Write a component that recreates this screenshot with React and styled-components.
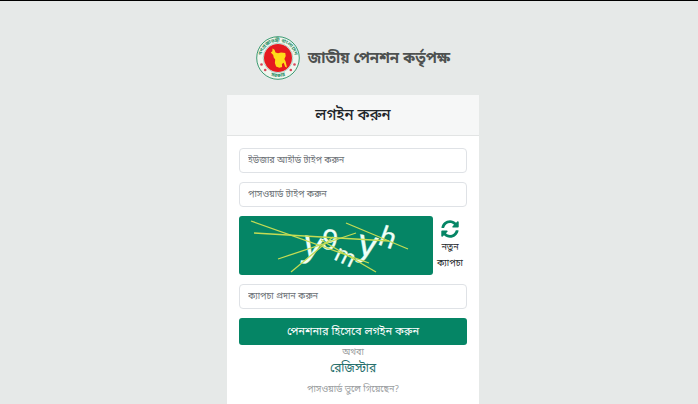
import React from "react";
import styled, { createGlobalStyle } from "styled-components";

const GlobalStyle = createGlobalStyle`
  *, *::before, *::after { box-sizing: border-box; }
  body {
    margin: 0;
    background: #e6e9e8;
    color: #212529;
    font-family: "Noto Sans Bengali", "Noto Sans", sans-serif;
    overflow: hidden;
  }
  button, input { font-family: inherit; }
`;

const Page = styled.div`
  display: flex;
  flex-direction: column;
  align-items: center;
  min-height: 100vh;
  padding: 34px 8px 0 16px;
  border-top: 1px solid #000;
`;

const Brand = styled.header`
  display: flex;
  align-items: center;
  gap: 8px;
  height: 46px;
`;

const Emblem = styled.svg`
  width: 44px;
  height: 44px;
  flex: none;
`;

const BrandName = styled.h1`
  margin: 0;
  padding-top: 2px;
  font-size: 15px;
  line-height: 24px;
  font-weight: 700;
  color: #4e5150;
  white-space: nowrap;
`;

const Card = styled.main`
  width: 100%;
  max-width: 252px;
  margin-top: 14px;
  background: #fff;
`;

const CardHeader = styled.div`
  display: flex;
  align-items: center;
  justify-content: center;
  height: 41px;
  background: #f6f7f7;
  border-bottom: 1px solid #e2e4e4;
`;

const CardTitle = styled.h2`
  margin: 0;
  padding-top: 2px;
  font-size: 15px;
  line-height: 24px;
  font-weight: 500;
`;

const LoginForm = styled.form`
  display: flex;
  flex-direction: column;
  gap: 9px;
  padding: 12px 12px 0;
`;

const TextField = styled.input`
  width: 100%;
  height: 25px;
  padding: 0 8px;
  border: 1px solid #dfe2e6;
  border-radius: 4px;
  background: #fff;
  color: #212529;
  font-size: 9px;
  outline: none;
  &::placeholder { color: #6b7075; opacity: 1; }
`;

const CaptchaRow = styled.div`
  display: flex;
  height: 59px;
`;

const CaptchaImage = styled.svg`
  flex: 1;
  min-width: 0;
  height: 59px;
  border-radius: 3px;
  background: #058565;
`;

const RefreshButton = styled.button`
  display: flex;
  flex-direction: column;
  align-items: center;
  flex: none;
  width: 34px;
  padding: 4px 0 0;
  border: 0;
  background: none;
  color: #212529;
  font-size: 9px;
  line-height: 16px;
  white-space: nowrap;
  svg { width: 18px; height: 18px; flex: none; margin-bottom: 2px; color: #058565; }
`;

const SubmitButton = styled.button`
  height: 27px;
  padding: 0;
  border: 0;
  border-radius: 3px;
  background: #058565;
  color: #fff;
  font-size: 11px;
  line-height: 24px;
`;

const Links = styled.div`
  display: flex;
  flex-direction: column;
  align-items: center;
  padding: 1px 0 12px;
`;

const Separator = styled.span`
  color: #999c9e;
  font-size: 9px;
  line-height: 15px;
`;

const RegisterLink = styled.a`
  color: #28706d;
  font-size: 12px;
  line-height: 16px;
  text-decoration: none;
`;

const ForgotLink = styled.a`
  margin-top: 5px;
  color: #999c9e;
  font-size: 9px;
  line-height: 16px;
  text-decoration: none;
`;

function GovernmentEmblem() {
  return (
    <Emblem viewBox="0 0 44 44" aria-hidden="true">
      <defs>
        <path id="ringTop" d="M5.5 25 A16.7 16.7 0 1 1 38.5 25" />
        <path id="ringBottom" d="M10 36.8 A19 19 0 0 0 34 36.8" />
      </defs>
      <circle cx="22" cy="22" r="21.3" fill="#f1f5ee" stroke="#3b9b72" strokeWidth="1" />
      <circle cx="22" cy="22" r="14.8" fill="#fff" stroke="#79b497" strokeWidth="0.6" />
      <circle cx="22" cy="22" r="14" fill="#e51b20" />
      <g fill="#2d9169" fontSize="5" fontWeight="700" textAnchor="middle">
        <text><textPath href="#ringTop" startOffset="50%">গণপ্রজাতন্ত্রী বাংলাদেশ</textPath></text>
        <text><textPath href="#ringBottom" startOffset="50%">সরকার</textPath></text>
      </g>
      <g fill="#d9485b">
        <circle cx="5.5" cy="28.5" r="1.3" />
        <circle cx="9.2" cy="34" r="1.3" />
        <circle cx="38.5" cy="28.5" r="1.3" />
        <circle cx="34.8" cy="34" r="1.3" />
      </g>
      <path
        fill="#ffdc19"
        d="M16.5 12.5l2 1.2 1 2.8 2.5.8 3-.8 4.3.5.4 3-1.3 3 1.2 2.5 1.4 6-1.8-.8-1.5-4-1.8 1.2.2 3-2.8.8-3.2-1.2-1.2-3.5.3-3.5-1.5-2-.5-2.5-2.4-2.5 1.6-1.2z"
      />
    </Emblem>
  );
}

function RefreshIcon() {
  return (
    <svg viewBox="0 0 512 512" fill="currentColor" aria-hidden="true">
      <path d="M370.7 133.3C339.5 104 298.9 88 255.8 88c-77.5.1-144.3 53.2-162.8 126.9-1.3 5.4-6.1 9.1-11.7 9.1H24.1c-7.5 0-13.2-6.8-11.8-14.2C33.9 94.9 134.8 8 256 8c66.4 0 126.8 26.1 171.3 68.7L463 41c15.1-15.1 41-4.4 41 17v134c0 13.3-10.7 24-24 24H346c-21.4 0-32.1-25.9-17-41l41.7-41.7zM32 296h134c21.4 0 32.1 25.9 17 41l-41.8 41.8c31.3 29.3 71.8 45.3 114.9 45.2 77.4-.1 144.3-53.1 162.8-126.8 1.3-5.4 6.1-9.1 11.7-9.1h57.3c7.5 0 13.2 6.8 11.8 14.2C478.1 417.1 377.2 504 256 504c-66.4 0-126.8-26.1-171.3-68.7L49 471c-15.1 15.1-41 4.4-41-17V320c0-13.3 10.7-24 24-24z" />
    </svg>
  );
}

function Captcha() {
  return (
    <CaptchaImage viewBox="0 0 194 59" role="img" aria-label="ক্যাপচা">
      <g fill="#effff8" stroke="#effff8" strokeWidth="0.3" fontFamily="Liberation Sans, sans-serif">
        <text fontSize="38" transform="translate(62 39) rotate(12)">y</text>
        <text fontSize="29" transform="translate(81 32) rotate(10)">9</text>
        <text fontSize="24" transform="translate(94 43) rotate(26)">m</text>
        <text fontSize="38" transform="translate(117 38) rotate(12)">y</text>
        <text fontSize="29" transform="translate(138 28) rotate(20)">h</text>
      </g>
      <g stroke="#c5dc54" strokeWidth="1.3" fill="none">
        <path d="M12 5L130 47" />
        <path d="M15 17L150 25" />
        <path d="M39 43L117 17" />
        <path d="M52 56L94 21" />
        <path d="M107 7L169 33" />
        <path d="M82 24L137 56" />
      </g>
    </CaptchaImage>
  );
}

export default function App() {
  return (
    <>
      <GlobalStyle />
      <Page>
        <Brand>
          <GovernmentEmblem />
          <BrandName>জাতীয় পেনশন কর্তৃপক্ষ</BrandName>
        </Brand>
        <Card>
          <CardHeader>
            <CardTitle>লগইন করুন</CardTitle>
          </CardHeader>
          <LoginForm onSubmit={(event) => event.preventDefault()}>
            <TextField type="text" aria-label="ইউজার আইডি" placeholder="ইউজার আইডি টাইপ করুন" />
            <TextField type="password" aria-label="পাসওয়ার্ড" placeholder="পাসওয়ার্ড টাইপ করুন" />
            <CaptchaRow>
              <Captcha />
              <RefreshButton type="button">
                <RefreshIcon />
                <span>নতুন</span>
                <span>ক্যাপচা</span>
              </RefreshButton>
            </CaptchaRow>
            <TextField type="text" aria-label="ক্যাপচা" placeholder="ক্যাপচা প্রদান করুন" />
            <SubmitButton type="submit">পেনশনার হিসেবে লগইন করুন</SubmitButton>
          </LoginForm>
          <Links>
            <Separator>অথবা</Separator>
            <RegisterLink href="#register">রেজিস্টার</RegisterLink>
            <ForgotLink href="#forgot">পাসওয়ার্ড ভুলে গিয়েছেন?</ForgotLink>
          </Links>
        </Card>
      </Page>
    </>
  );
}
